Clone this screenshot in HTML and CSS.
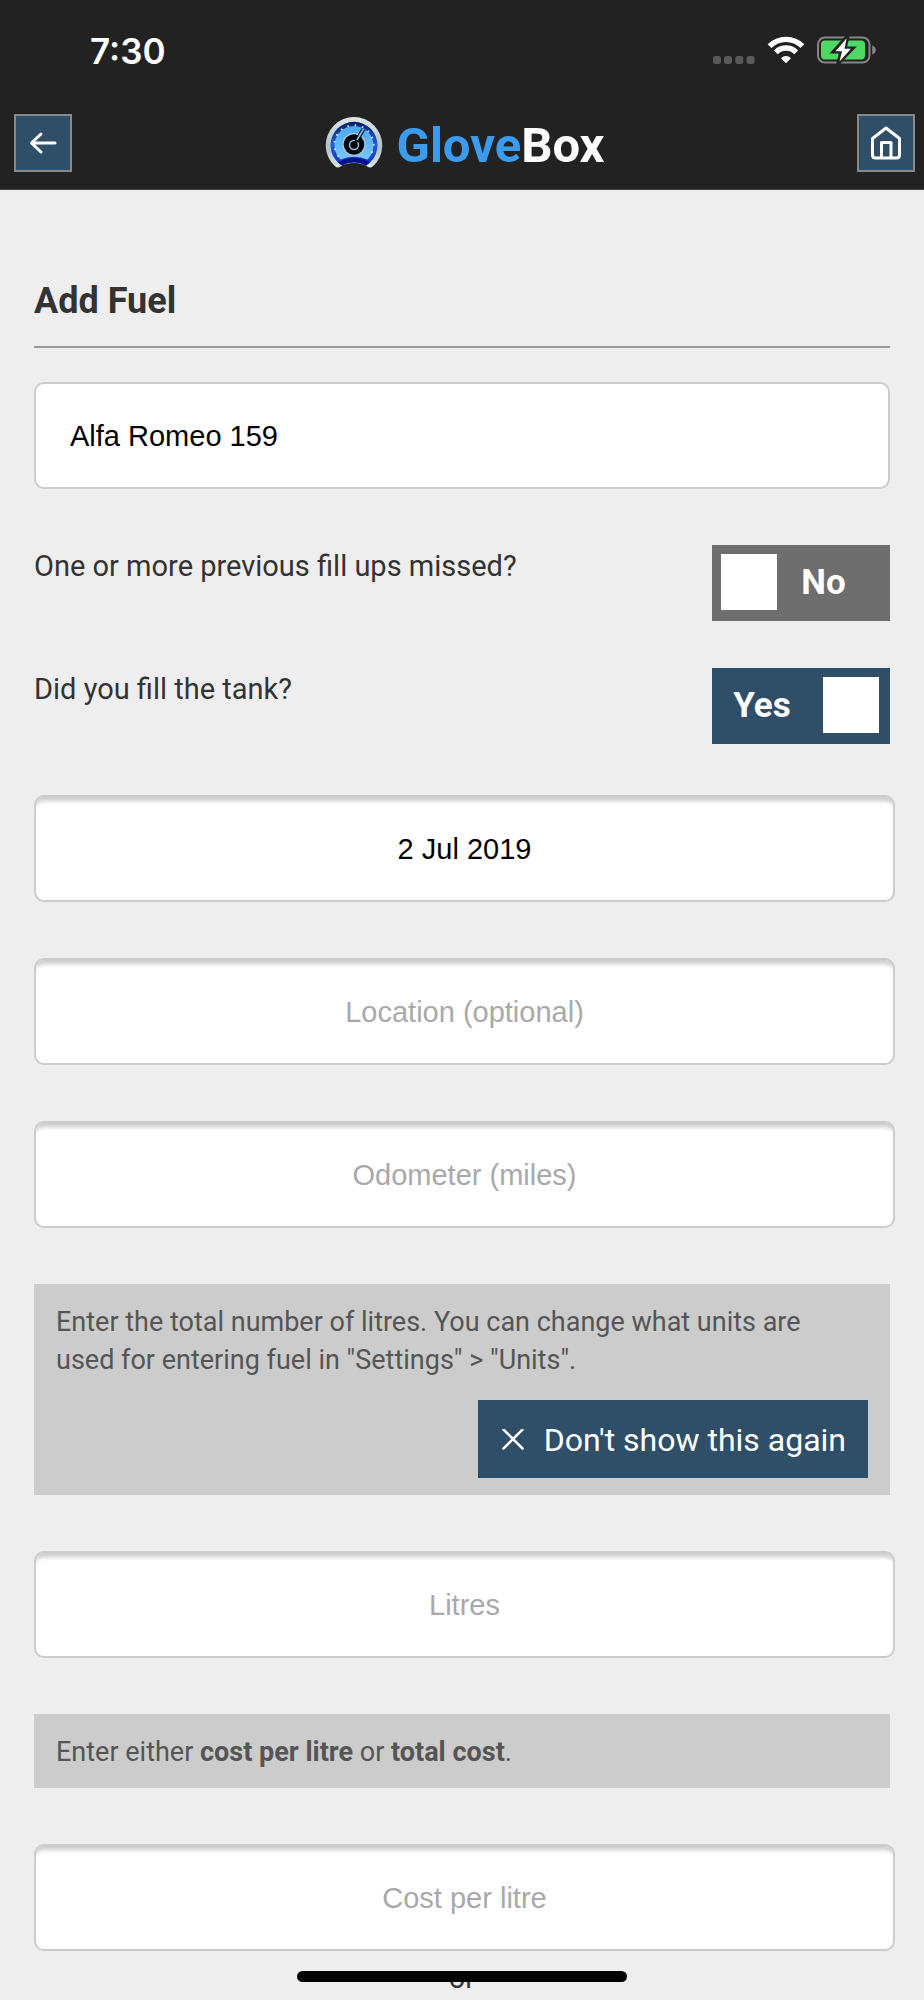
FILE: index.html
```html
<!DOCTYPE html>
<html lang="en">
<head>
<meta charset="utf-8">
<meta name="viewport" content="width=device-width, initial-scale=1">
<title>GloveBox - Add Fuel</title>
<link rel="stylesheet" href="styles.css">
</head>
<body>
<div class="status-bar">
  <span class="status-time">7:30</span>
  <div class="status-icons">
    <svg class="signal" width="42" height="8" viewBox="0 0 42 8" aria-hidden="true">
      <g fill="#5a5a5a"><rect width="8" height="8" rx="2.5"/><rect x="11" width="8" height="8" rx="2.5"/><rect x="22.300" width="8" height="8" rx="2.500"/><rect x="33.500" width="8" height="8" rx="2.500"/></g>
    </svg>
    <svg class="wifi" width="38" height="28" viewBox="0 0 38 28" aria-hidden="true">
      <g fill="none" stroke="#fff" stroke-width="5.400">
        <path d="M2.600 10.200a23.200 23.200 0 0 1 32.800 0"/>
        <path d="M8.800 16.300a14.400 14.400 0 0 1 20.400 0"/>
      </g>
      <path d="M14 22.200a7 7 0 0 1 10 0l-5 5z" fill="#fff"/>
    </svg>
    <svg class="battery" width="60" height="28" viewBox="0 0 60 28" aria-hidden="true">
      <rect x="1" y="1.500" width="51.500" height="25" rx="7" fill="none" stroke="#858585" stroke-width="2"/>
      <rect x="4" y="4.500" width="44" height="19" rx="4" fill="#4cd964"/>
      <path d="M55.200 9.500q3.600 1.500 3.600 4.500t-3.600 4.500z" fill="#858585"/>
      <path d="M29.500 2.500L18 15h7L22.500 25 34 13h-7z" fill="#222" stroke="#222" stroke-width="5"/>
      <path d="M29.500 2.500L18.500 15.300h6.500L22.500 25.500 34 12.700h-6.500z" fill="#fff"/>
    </svg>
  </div>
</div>

<header class="app-header">
  <button class="nav-button" type="button" aria-label="Back">
    <svg width="54" height="54" viewBox="0 0 54 54" fill="none" stroke="#fff" stroke-width="3" stroke-linecap="round" stroke-linejoin="round" aria-hidden="true">
      <path d="M39 27H15.500M25 18l-9.500 9 9.500 9"/>
    </svg>
  </button>
  <div class="brand">
    <svg class="brand-logo" width="58" height="54" viewBox="0 0 58 54" aria-hidden="true">
      <defs>
        <linearGradient id="rim" x1="0" y1="0" x2="0" y2="1"><stop offset="0" stop-color="#dfe8e8"/><stop offset=".6" stop-color="#b0c0c4"/><stop offset="1" stop-color="#dce6e6"/></linearGradient>
        <linearGradient id="ring" x1="0" y1="0" x2="0" y2="1"><stop offset="0" stop-color="#061a68"/><stop offset=".5" stop-color="#1c60d6"/><stop offset="1" stop-color="#0634c4"/></linearGradient>
        <linearGradient id="face" x1="0" y1="0" x2="0" y2="1"><stop offset="0" stop-color="#4aa8f6"/><stop offset="1" stop-color="#7cc4ff"/></linearGradient>
      </defs>
      <path d="M10 50.300A28.300 28.300 0 1 1 48 50.300Q44.500 53 41 49.500Q29 44 17 49.500Q13.500 53 10 50.300z" fill="url(#rim)"/>
      <path d="M13 46.500A23.500 23.500 0 1 1 45 46.500L41 49.500Q29 43 17 49.500z" fill="url(#ring)"/>
      <path d="M15.500 43.500A19.500 19.500 0 1 1 42.500 43.500Q29 38 15.500 43.500z" fill="url(#face)"/>
      <path d="M13.500 40.500A19.500 19.500 0 1 1 44.500 40.500" fill="none" stroke="#d4eaff" stroke-width="2" stroke-dasharray="1.500 5.800"/>
      <path d="M13 46.500Q29 37 45 46.500L41 49.500Q29 43 17 49.500z" fill="#020f90"/>
      <circle cx="29" cy="28.500" r="11.500" fill="#a8c8dc"/>
      <circle cx="29" cy="28.500" r="10.300" fill="#020408"/>
      <path d="M31 26L38.500 13" stroke="#061424" stroke-width="4"/>
      <circle cx="29" cy="29" r="4.500" fill="#020408" stroke="#8cc4e4" stroke-width="1.500"/>
      <path d="M31 25.500L38.500 13" stroke="#8cc4e4" stroke-width="1.500"/>
      <path d="M29 29L32 24" stroke="#020408" stroke-width="3"/>
    </svg>
    <span class="brand-name"><span class="brand-accent">Glove</span>Box</span>
  </div>
  <button class="nav-button" type="button" aria-label="Home">
    <svg width="54" height="54" viewBox="0 0 54 54" fill="none" stroke="#fff" stroke-width="3" stroke-linecap="round" stroke-linejoin="round" aria-hidden="true">
      <path d="M13.500 22.500L27 12l13.500 10.500V39q0 3-3 3h-21q-3 0-3-3z"/>
      <path d="M22.500 41.500v-15h9.500v15"/>
    </svg>
  </button>
</header>

<main class="page">
  <h1 class="page-title">Add Fuel</h1>
  <form class="fuel-form">
    <select class="field field-select" aria-label="Vehicle">
      <option>Alfa Romeo 159</option>
    </select>

    <div class="toggles">
      <label class="toggle-row">
        <span class="toggle-label">One or more previous fill ups missed?</span>
        <input class="toggle-input" type="checkbox">
        <span class="toggle" aria-hidden="true"><span class="toggle-knob"></span><span class="toggle-text">No</span></span>
      </label>
      <label class="toggle-row">
        <span class="toggle-label">Did you fill the tank?</span>
        <input class="toggle-input" type="checkbox" checked>
        <span class="toggle toggle-on" aria-hidden="true"><span class="toggle-text">Yes</span><span class="toggle-knob"></span></span>
      </label>
    </div>

    <input class="field field-text" type="text" value="2 Jul 2019" aria-label="Date">
    <input class="field field-text" type="text" placeholder="Location (optional)" aria-label="Location (optional)">
    <input class="field field-text" type="text" placeholder="Odometer (miles)" aria-label="Odometer (miles)">

    <section class="hint">
      <p class="hint-text">Enter the total number of litres. You can change what units are used for entering fuel in "Settings" &gt; "Units".</p>
      <button class="dismiss" type="button">
        <svg width="22" height="22" viewBox="0 0 22 22" fill="none" stroke="#fff" stroke-width="2.500" stroke-linecap="round" aria-hidden="true"><path d="M1.500 .5l19 19M20.500 .5l-19 19"/></svg>
        Don't show this again
      </button>
    </section>

    <input class="field field-text" type="text" placeholder="Litres" aria-label="Litres">

    <section class="hint">
      <p class="hint-text">Enter either <b>cost per litre</b> or <b>total cost</b>.</p>
    </section>

    <div class="cost">
      <input class="field field-text" type="text" placeholder="Cost per litre" aria-label="Cost per litre">
      <p class="or">or</p>
    </div>
  </form>
</main>
<div class="home-indicator"></div>
</body>
</html>
```
FILE: styles.css
```css
* {
  box-sizing: border-box;
}

body {
  margin: 0;
  background: #eee;
  color: #333;
  font-family: Roboto, sans-serif;
  font-size: 29px;
}

.status-bar {
  display: flex;
  align-items: center;
  justify-content: space-between;
  height: 100px;
  padding: 0 47px 0 90px;
  background: #222;
  color: #fff;
}

.status-time {
  padding-top: 2px;
  font-family: Inter, sans-serif;
  font-size: 35px;
  font-weight: 600;
}

.status-icons {
  display: flex;
  align-items: flex-end;
  gap: 12px;
}

.app-header {
  display: flex;
  align-items: center;
  justify-content: space-between;
  padding: 14px 9px 17px 14px;
  border-bottom: 1px solid #444;
  background: #222;
}

.nav-button {
  display: flex;
  padding: 0;
  border: 2px solid #888;
  background: #2f4f68;
}

.brand {
  display: flex;
  align-items: center;
  gap: 14px;
}

.brand-name {
  padding-top: 6px;
  color: #fff;
  font-size: 49px;
  font-weight: 700;
  line-height: 52px;
}

.brand-accent {
  color: #3d9bee;
}

.page {
  padding: 85px 34px 0;
}

.page-title {
  margin: 0 0 34px;
  padding-bottom: 19px;
  border-bottom: 2px solid #999;
  font-size: 36px;
  font-weight: 700;
  line-height: 52px;
}

.fuel-form {
  display: flex;
  flex-direction: column;
  gap: 56px;
}

.field {
  display: block;
  width: 100%;
  height: 107px;
  border: 2px solid #ccc;
  border-radius: 10px;
  background: #fff;
  color: #000;
  font-family: "Liberation Sans", sans-serif;
  font-size: 29px;
}

.field-select {
  padding: 0 34px;
  appearance: none;
}

.field-text {
  width: calc(100% + 5px);
  padding: 2px 20px 0;
  box-shadow: inset 0 8px 4px -4px #ccc;
  text-align: center;
}

.field-text::placeholder {
  color: #a9a9a9;
}

.toggles {
  display: flex;
  flex-direction: column;
  gap: 47px;
  margin-bottom: -5px;
}

.toggle-row {
  position: relative;
  display: flex;
  align-items: flex-start;
  justify-content: space-between;
}

.toggle-label {
  line-height: 42px;
}

.toggle-input {
  position: absolute;
  top: 0;
  right: 0;
  width: 178px;
  height: 76px;
  margin: 0;
  opacity: 0;
}

.toggle {
  display: flex;
  align-items: center;
  width: 178px;
  height: 76px;
  padding: 0 11px 2px 9px;
  background: #6e6e6e;
  color: #fff;
  font-size: 35px;
  font-weight: 700;
}

.toggle-on {
  background: #2f4f68;
}

.toggle-knob {
  width: 56px;
  height: 56px;
  background: #fff;
}

.toggle-text {
  flex: 1;
  padding-right: 9px;
  text-align: center;
}

.toggle-on .toggle-text {
  padding-right: 20px;
}

.hint {
  display: flex;
  flex-direction: column;
  align-items: flex-end;
  gap: 21px;
  padding: 19px 22px 17px;
  background: #ccc;
  color: #555;
}

.hint-text {
  align-self: stretch;
  margin: 0;
  padding-right: 22px;
  font-size: 27px;
  line-height: 38px;
}

.dismiss {
  display: flex;
  align-items: center;
  gap: 20px;
  height: 78px;
  padding: 2px 22px 0 24px;
  border: 0;
  background: #2f4f68;
  color: #fff;
  font-family: Roboto, sans-serif;
  font-size: 32px;
}

.or {
  margin: 0;
  padding-top: 6px;
  line-height: 42px;
  text-align: center;
}

.home-indicator {
  position: fixed;
  bottom: 18px;
  left: 50%;
  width: 330px;
  height: 11px;
  border-radius: 6px;
  background: #000;
  transform: translateX(-50%);
}
```
